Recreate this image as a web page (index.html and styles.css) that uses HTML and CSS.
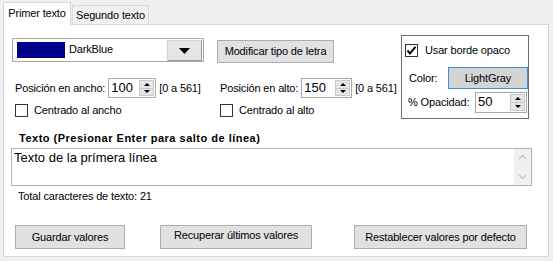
FILE: index.html
```html
<!DOCTYPE html>
<html lang="es">
<head>
<meta charset="utf-8">
<title>Texto</title>
<link rel="stylesheet" href="styles.css">
</head>
<body>
<div class="window">
  <div class="tabs">
    <div class="tab active">Primer texto</div>
    <div class="tab">Segundo texto</div>
  </div>
  <div class="panel">
    <div class="top">
      <div class="left">
        <div class="row row1">
          <div class="combo">
            <span class="swatch"></span>
            <span class="combo-text">DarkBlue</span>
            <span class="combo-btn"><svg width="11" height="6" viewBox="0 0 11 6"><path d="M0 0H11L5.5 6Z" fill="#000"/></svg></span>
          </div>
          <div class="btn font-btn">Modificar tipo de letra</div>
        </div>
        <div class="row grid2 row2">
          <div class="field">
            <span class="lbl">Posición en ancho:</span>
            <div class="spin w48"><span class="val">100</span><span class="arrows"><span class="up"></span><span class="down"></span></span></div>
            <span class="range">[0 a 561]</span>
          </div>
          <div class="field">
            <span class="lbl">Posición en alto:</span>
            <div class="spin w51"><span class="val">150</span><span class="arrows"><span class="up"></span><span class="down"></span></span></div>
            <span class="range">[0 a 561]</span>
          </div>
        </div>
        <div class="row grid2 row3">
          <div class="check"><span class="box"></span><span class="cl">Centrado al ancho</span></div>
          <div class="check"><span class="box"></span><span class="cl">Centrado al alto</span></div>
        </div>
      </div>
      <div class="group">
        <div class="check"><span class="box checked"><svg width="11" height="11" viewBox="0 0 11 11"><path d="M1.5 5.5L4 8.5L9.5 1.8" fill="none" stroke="#000" stroke-width="2"/></svg></span><span class="cl gl">Usar borde opaco</span></div>
        <div class="grow color-row">
          <span class="glbl">Color:</span>
          <div class="color-btn">LightGray</div>
        </div>
        <div class="grow opac-row">
          <span class="glbl2">% Opacidad:</span>
          <div class="spin w52"><span class="val">50</span><span class="arrows"><span class="up"></span><span class="down"></span></span></div>
        </div>
      </div>
    </div>
    <div class="text-label">Texto (Presionar Enter para salto de línea)</div>
    <div class="textarea">
      <div class="ta-text">Texto de la prímera línea</div>
      <div class="ta-scroll">
        <svg width="9" height="6" viewBox="0 0 9 6"><path d="M1 5L4.5 1.5L8 5" fill="none" stroke="#c4c4c4" stroke-width="1.3"/></svg>
        <svg width="9" height="6" viewBox="0 0 9 6"><path d="M1 1L4.5 4.5L8 1" fill="none" stroke="#c4c4c4" stroke-width="1.3"/></svg>
      </div>
    </div>
    <div class="total">Total caracteres de texto: 21</div>
    <div class="buttons">
      <div class="btn b-save">Guardar valores</div>
      <div class="btn b-load">Recuperar últimos valores</div>
      <div class="btn b-reset">Restablecer valores por defecto</div>
    </div>
  </div>
</div>
</body>
</html>
```
FILE: styles.css
```css
* { box-sizing: border-box; }
html, body { margin: 0; padding: 0; }
body {
  background: #f0f0f0;
  font-family: "Liberation Sans", Arial, sans-serif;
  font-size: 11px;
  line-height: 13px;
  letter-spacing: -0.15px;
  color: #000;
  width: 553px;
  height: 261px;
  overflow: hidden;
}
.window { padding: 2px 0 0 3px; }

.tabs {
  display: flex;
  align-items: flex-end;
  height: 22px;
  position: relative;
  z-index: 1;
}
.tab {
  height: 19px;
  width: 77px;
  margin-left: 1px;
  border: 1px solid #d9d9d9;
  border-bottom: none;
  background: #f0f0f0;
  padding-top: 3px;
  text-align: center;
}
.tab.active {
  width: 68px;
  height: 23px;
  margin-left: 0;
  margin-bottom: -1px;
  background: #fff;
  padding-top: 4px;
}

.panel {
  width: 546px;
  height: 233px;
  background: #fff;
  border: 1px solid #d9d9d9;
  padding: 10px 0 0 8px;
}

.top { display: flex; align-items: flex-start; }
.left { width: 389px; padding-top: 3px; }

.row1 { display: flex; align-items: flex-start; }
.combo {
  width: 192px;
  height: 24px;
  border: 1px solid #a9a9a9;
  background: #fff;
  display: flex;
  align-items: flex-start;
}
.swatch {
  width: 48px;
  height: 16px;
  margin: 3px 0 0 4px;
  background: #00008b;
}
.combo-text { margin: 4px 0 0 4px; flex: 1; }
.combo-btn {
  width: 35px;
  height: 21px;
  margin: 1px 1px 0 0;
  background: #e5e5e5;
  border: 1px solid #d4d4d4;
  border-right-color: #9c9c9c;
  border-bottom-color: #9c9c9c;
  display: flex;
  align-items: center;
  justify-content: center;
}

.btn {
  background: #e1e1e1;
  border: 1px solid #adadad;
  display: flex;
  align-items: center;
  justify-content: center;
  white-space: nowrap;
}
.font-btn { width: 117px; height: 23px; margin: 2px 0 0 13px; }

.grid2 {
  display: grid;
  grid-template-columns: 205px 1fr;
  padding-left: 3px;
}
.row2 { margin-top: 15px; }
.row3 { margin-top: 6px; }

.field { display: flex; align-items: center; height: 20px; white-space: nowrap; }
.range { margin-left: 3px; }

.spin {
  height: 20px;
  margin-left: 3px;
  border: 1px solid #a9a9a9;
  background: #fff;
  display: flex;
  align-items: stretch;
}
.w48 { width: 48px; }
.w51 { width: 51px; }
.w52 { width: 52px; height: 21px; margin-left: 0; }
.val {
  flex: 1;
  font-size: 13px;
  line-height: 18px;
  letter-spacing: 0;
  padding-left: 2px;
}
.arrows {
  width: 15px;
  margin: 1px 1px 1px 0;
  display: flex;
  flex-direction: column;
}
.arrows span {
  flex: 1;
  background: #e6e6e6;
  border: 1px solid #c8c8c8;
  display: flex;
  align-items: center;
  justify-content: center;
}
.arrows .down { border-top: none; }
.arrows .up::after {
  content: "";
  border-left: 3px solid transparent;
  border-right: 3px solid transparent;
  border-bottom: 3px solid #000;
}
.arrows .down::after {
  content: "";
  border-left: 3px solid transparent;
  border-right: 3px solid transparent;
  border-top: 3px solid #000;
}

.check { display: flex; align-items: center; height: 13px; }
.box {
  width: 13px;
  height: 13px;
  border: 1px solid #333;
  background: #fff;
  display: flex;
  align-items: center;
  justify-content: center;
}
.cl { margin-left: 6px; }
.gl { margin-left: 7px; }

.group {
  width: 128px;
  height: 84px;
  border: 1px solid #6d6d6d;
  background: #fff;
  padding: 8px 0 0 3px;
}
.grow { display: flex; align-items: center; }
.color-row { margin-top: 10px; }
.glbl { margin-left: 4px; width: 39px; }
.color-btn {
  width: 80px;
  height: 22px;
  background: #d3d3d3;
  border: 1px solid #3d8ee0;
  display: flex;
  align-items: center;
  justify-content: center;
}
.opac-row { margin-top: 3px; }
.glbl2 { margin-left: 3px; width: 67px; }

.text-label {
  margin: 13px 0 0 7px;
  font-weight: bold;
  letter-spacing: 0.5px;
}
.textarea {
  width: 521px;
  height: 38px;
  margin: 3px 0 0 -1px;
  border: 1px solid #b4b4b4;
  display: flex;
}
.ta-text {
  flex: 1;
  font-size: 13px;
  line-height: 15px;
  letter-spacing: 0;
  padding: 1px 0 0 2px;
}
.ta-scroll {
  width: 17px;
  background: #f0f0f0;
  display: flex;
  flex-direction: column;
  justify-content: space-between;
  align-items: center;
  padding: 5px 0 5px;
}
.total { margin: 4px 0 0 6px; }

.buttons { display: flex; margin-top: 22px; padding-left: 3px; }
.buttons .btn { height: 24px; }
.b-save { width: 110px; }
.b-load { width: 152px; margin-left: 35px; padding-bottom: 4px; }
.b-reset { width: 173px; margin-left: 42px; }
```
